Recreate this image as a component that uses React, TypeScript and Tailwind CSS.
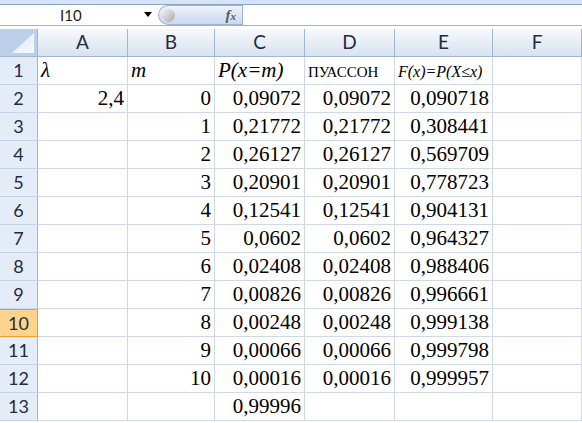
import React from "react";

const serif = { fontFamily: '"Liberation Serif", "Times New Roman", serif' };
const sans = { fontFamily: 'Lato, "Open Sans", sans-serif' };

type Row = [string, string, string, string, string];
const rows: Row[] = [
  ["2,4", "0", "0,09072", "0,09072", "0,090718"],
  ["", "1", "0,21772", "0,21772", "0,308441"],
  ["", "2", "0,26127", "0,26127", "0,569709"],
  ["", "3", "0,20901", "0,20901", "0,778723"],
  ["", "4", "0,12541", "0,12541", "0,904131"],
  ["", "5", "0,0602", "0,0602", "0,964327"],
  ["", "6", "0,02408", "0,02408", "0,988406"],
  ["", "7", "0,00826", "0,00826", "0,996661"],
  ["", "8", "0,00248", "0,00248", "0,999138"],
  ["", "9", "0,00066", "0,00066", "0,999798"],
  ["", "10", "0,00016", "0,00016", "0,999957"],
  ["", "", "0,99996", "", ""],
];

const cols = ["A", "B", "C", "D", "E", "F"];
const grid = "grid grid-cols-[38px_90px_87px_90px_90px_98px_1fr]";

function RowHead({ n, sel }: { n: number; sel?: boolean }) {
  return (
    <div
      className={
        "h-[28px] flex items-center justify-center text-[18px] text-[#1f2d3d] border-r border-b " +
        (sel
          ? "bg-[#fdd38d] border-[#f29a36] border-t border-t-[#f29a36]"
          : "bg-[#e4ecf7] border-r-[#9eb6ce] border-b-[#c6d5e9]")
      }
      style={sans}
    >
      {n}
    </div>
  );
}

function Cell({ v, left, cls }: { v: string; left?: boolean; cls?: string }) {
  return (
    <div
      className={
        "h-[28px] flex items-center border-r border-b border-[#d0d7e5] overflow-hidden whitespace-nowrap text-black " +
        (left ? "justify-start pl-[3px] " : "justify-end pr-[3px] ") +
        (cls || "text-[21px]")
      }
      style={serif}
    >
      {v}
    </div>
  );
}

export default function App() {
  return (
    <div className="w-[582px] h-[423px] overflow-hidden bg-white relative">
      <div className="h-[4px] bg-[#d4e3f5]" />
      <div className="h-px bg-[#8aa3c2]" />
      <div className="h-[20px] flex items-stretch bg-white">
        <div className="w-[150px] flex items-center relative">
          <span className="absolute left-[60px] text-[15px] text-[#1b1b1b]" style={sans}>
            I10
          </span>
          <svg className="absolute left-[144px] top-[7px]" width="8" height="5" viewBox="0 0 8 5">
            <path d="M0 0 H8 L4 5 Z" fill="#000" />
          </svg>
        </div>
        <div className="w-[8px]" />
        <div className="w-[84px] rounded-l-full bg-gradient-to-b from-[#eef3fa] to-[#c9d8ee] border border-r-0 border-[#9db3d0] flex items-center relative">
          <div className="ml-[3px] w-[13px] h-[13px] rounded-full bg-gradient-to-br from-[#f4f4f4] to-[#a9a9a9]" />
          <span
            className="absolute right-[6px] text-[15px] italic font-bold text-[#5a5a5a]"
            style={serif}
          >
            f<span className="text-[11px]">x</span>
          </span>
        </div>
        <div className="w-px bg-[#9db3d0]" />
        <div className="flex-1 bg-white" />
      </div>
      <div className="h-px bg-[#a3b4c9]" />
      <div className="h-[3px] bg-white" />
      <div className={grid + " h-[28px]"}>
        <div className="h-[28px] bg-[#bcd0ea] border-r border-b border-[#9eb6ce] relative">
          <svg className="absolute right-[3px] bottom-[3px]" width="22" height="20" viewBox="0 0 22 20">
            <defs>
              <linearGradient id="tg" x1="0" y1="0" x2="1" y2="1">
                <stop offset="0" stopColor="#dfe8f4" />
                <stop offset="1" stopColor="#f7f9fc" />
              </linearGradient>
            </defs>
            <path d="M22 0 V20 H0 Z" fill="url(#tg)" />
          </svg>
        </div>
        {cols.map((c) => (
          <div
            key={c}
            className="h-[28px] flex items-center justify-center bg-gradient-to-b from-[#f7f9fc] to-[#d8e2ef] border-r border-b border-[#9eb6ce] text-[19px] text-[#1f2d3d]"
            style={sans}
          >
            {c}
          </div>
        ))}
      </div>
      <div className={grid}>
        <RowHead n={1} />
        <Cell v="λ" left cls="italic text-[21px]" />
        <Cell v="m" left cls="italic text-[21px]" />
        <Cell v="P(x=m)" left cls="italic text-[21px]" />
        <Cell v="ПУАССОН" left cls="text-[15px] pt-[3px]" />
        <Cell v="F(x)=P(X≤x)" left cls="italic text-[16px] pt-[2px]" />
        <Cell v="" />
      </div>
      {rows.map((r, i) => (
        <div key={i} className={grid}>
          <RowHead n={i + 2} sel={i + 2 === 10} />
          <Cell v={r[0]} />
          <Cell v={r[1]} />
          <Cell v={r[2]} />
          <Cell v={r[3]} />
          <Cell v={r[4]} />
          <Cell v="" />
        </div>
      ))}
    </div>
  );
}
